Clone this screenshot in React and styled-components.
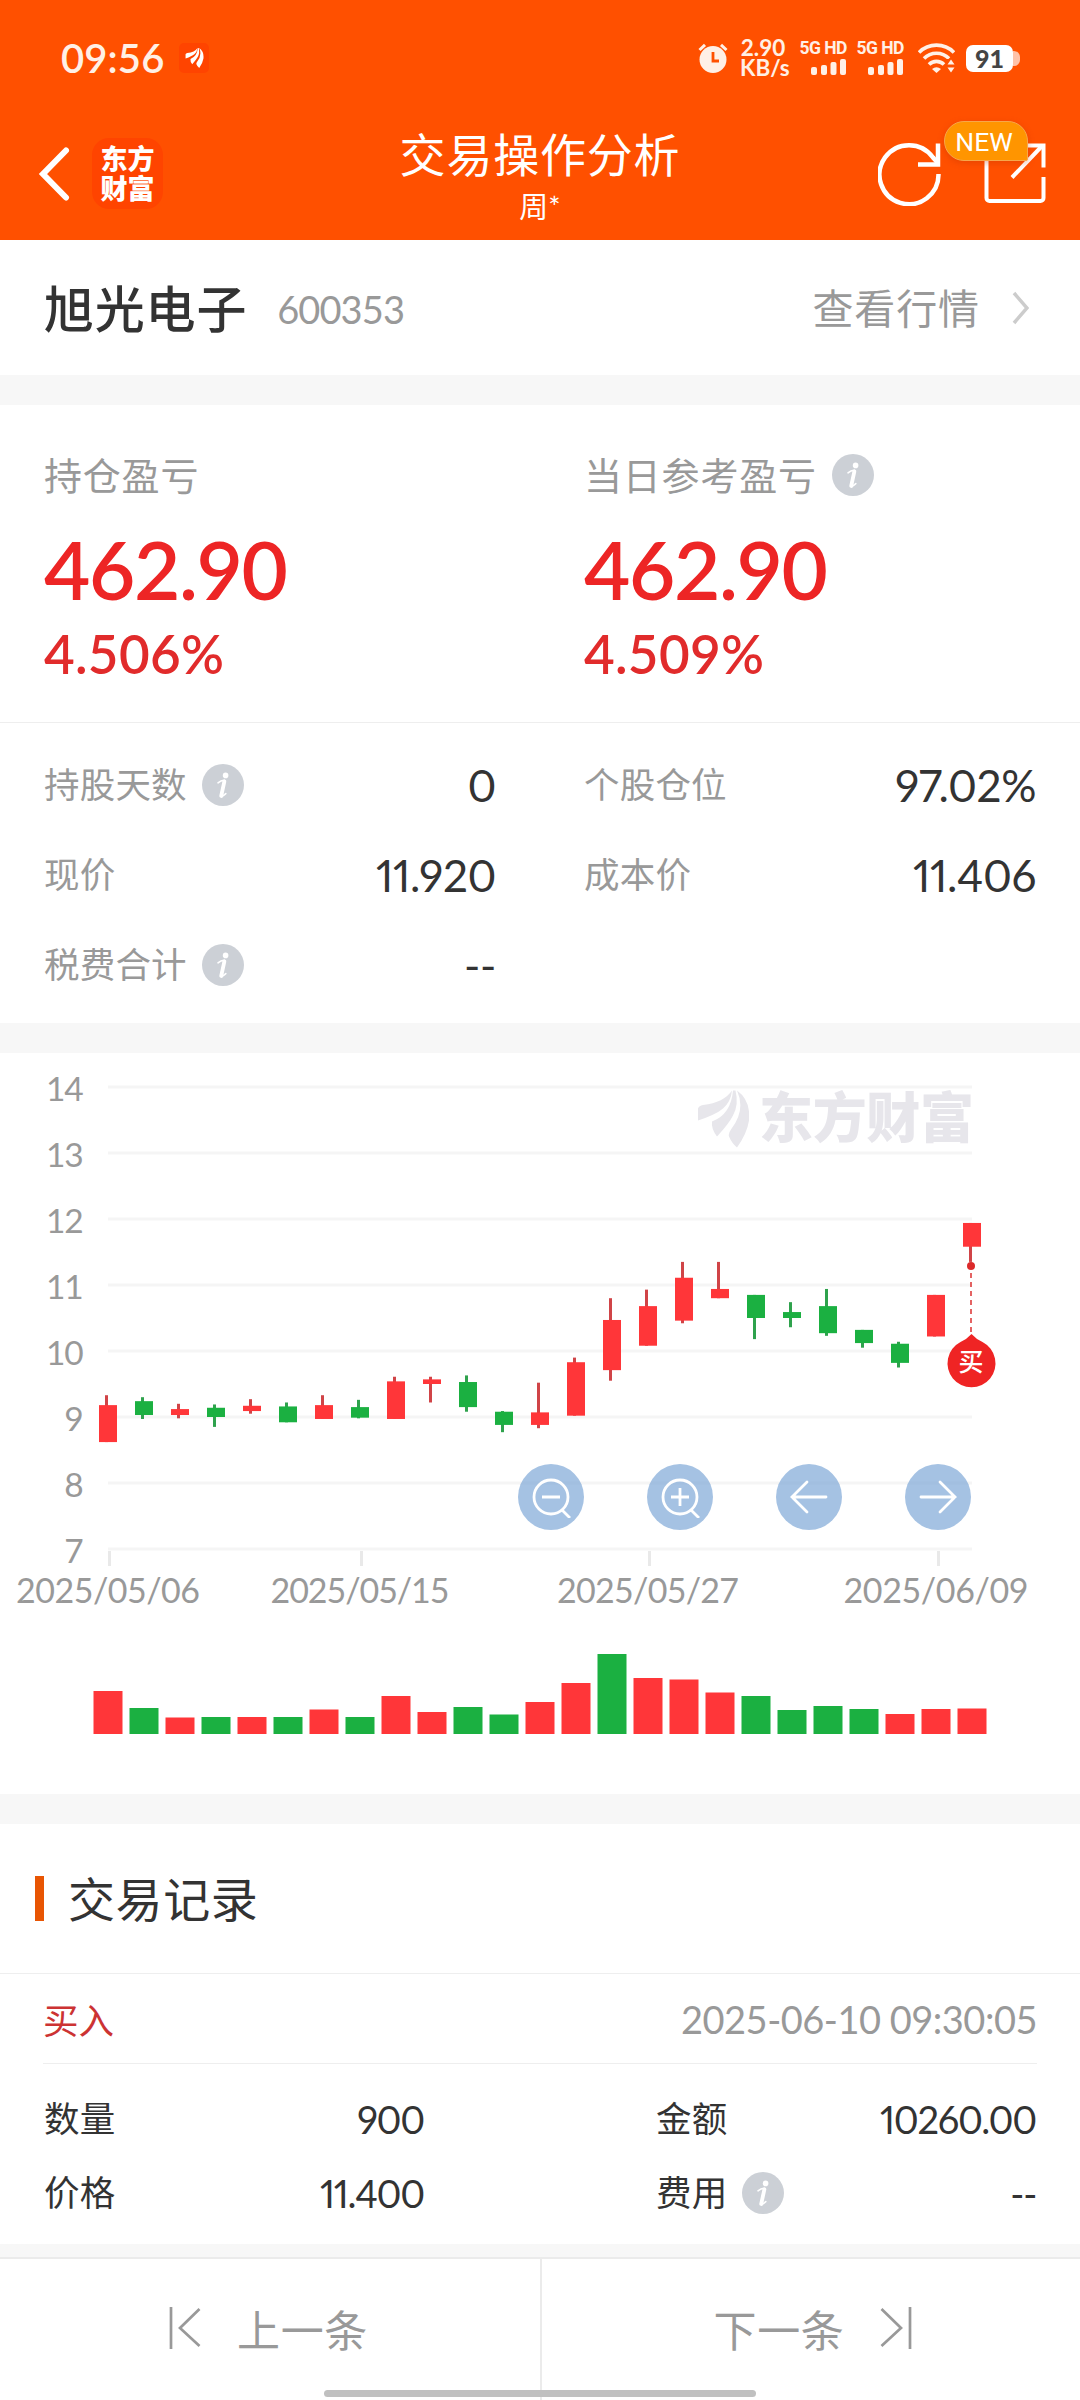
import styled, { createGlobalStyle } from 'styled-components';

const GlobalStyle = createGlobalStyle`
    * {
        box-sizing: border-box;
    }

    body {
        margin: 0;
        background-color: #ffffff;
        color: #333333;
        font-family: Lato, "Noto Sans CJK SC", sans-serif;
    }

    svg {
        display: block;
        flex-shrink: 0;
    }
`;

const Page = styled.div`
    width: 1080px;
    height: 2400px;
    display: flex;
    flex-direction: column;
    overflow: hidden;
`;

const Header = styled.header`
    height: 240px;
    background-color: #ff5000;
    color: #ffffff;
`;

const StatusBar = styled.div`
    height: 116px;
    padding: 0 60px 0 61px;
    display: flex;
    align-items: center;
    color: #fff0e6;
`;

const Clock = styled.span`
    width: 118px;
    font-size: 40px;
    font-weight: 600;
    line-height: 40px;
    letter-spacing: 0.1px;
`;

const StatusIcons = styled.div`
    margin-left: auto;
    display: flex;
    align-items: center;
`;

const NetSpeed = styled.div`
    width: 46px;
    margin-left: 12px;
    font-size: 22.5px;
    font-weight: 700;
    line-height: 20px;
    text-align: center;
    white-space: nowrap;
`;

const Signal = styled.div`
    width: 48px;
    margin-left: ${({ $gap }) => $gap}px;
    display: flex;
    flex-direction: column;
    align-items: flex-end;
    gap: 4px;
    font-family: Roboto, sans-serif;
    font-size: 17.5px;
    font-weight: 700;
    line-height: 14px;
    letter-spacing: -0.5px;
    white-space: nowrap;
`;

const WifiIcon = styled.svg`
    margin-left: 14px;
`;

const Battery = styled.div`
    width: 47px;
    height: 27px;
    margin-left: 11px;
    border-radius: 7px;
    background-color: #ffffff;
    color: #444444;
    font-size: 25px;
    font-weight: 900;
    line-height: 27px;
    text-align: center;
`;

const BatteryTip = styled.div`
    width: 7px;
    height: 15px;
    border-radius: 0 6px 6px 0;
    background-color: #ffc2a8;
`;

const NavBar = styled.div`
    height: 124px;
    padding: 0 34px 9px 38px;
    display: grid;
    grid-template-columns: 1fr 300px 1fr;
    align-items: center;
`;

const NavLeft = styled.div`
    display: flex;
    align-items: center;
    gap: 22px;
`;

const LogoBox = styled.div`
    width: 71px;
    height: 71px;
    padding-top: 6px;
    border-radius: 17px;
    background-color: #ff4400;
    font-size: 27px;
    font-weight: 900;
    line-height: 30px;
    text-align: center;
`;

const Title = styled.div`
    margin-left: -4px;
    padding-top: 10px;
    text-align: center;
    white-space: nowrap;

    h1 {
        margin: 0;
        font-size: 46px;
        font-weight: 400;
        line-height: 56px;
        letter-spacing: 0.8px;
    }

    p {
        margin: 0;
        font-size: 29px;
        line-height: 47px;
    }
`;

const NavRight = styled.div`
    display: flex;
    justify-content: flex-end;
    gap: 42px;
`;

const ShareButton = styled.div`
    position: relative;
`;

const NewBadge = styled.span`
    position: absolute;
    top: -21px;
    left: -40px;
    width: 84px;
    height: 40px;
    border: 1px solid #f7a64a;
    border-radius: 20px 20px 2px 20px;
    background-color: #ff9500;
    box-shadow: 0 2px 6px rgba(190, 50, 0, 0.35);
    font-family: Roboto, sans-serif;
    font-size: 26.5px;
    line-height: 39px;
    text-align: center;
    padding-right: 4px;
`;

const Divider = styled.div`
    height: ${({ $height }) => $height}px;
    flex-shrink: 0;
    background-color: #f7f7f7;
`;

const StockBar = styled.section`
    height: 135px;
    padding: 3px 51px 0 44px;
    display: flex;
    align-items: center;
`;

const StockName = styled.h2`
    margin: 0;
    font-size: 50px;
    font-weight: 500;
    line-height: 60px;
    letter-spacing: 0.8px;
`;

const StockCode = styled.span`
    margin-left: 30px;
    color: #999999;
    font-size: 38px;
    line-height: 40px;
    letter-spacing: -0.9px;
`;

const QuoteLink = styled.a`
    margin-left: auto;
    display: flex;
    align-items: center;
    gap: 32px;
    color: #999999;
    font-size: 41px;
    line-height: 44px;
    letter-spacing: 0.9px;

    svg {
        margin-top: -3px;
    }
`;

const Summary = styled.section`
    height: 318px;
    padding-top: 48px;
    display: grid;
    grid-template-columns: 1fr 1fr;
    border-bottom: 1px solid #eeeeee;
`;

const SummaryItem = styled.div`
    padding-left: 44px;
    color: #ed2525;
`;

const SummaryLabel = styled.div`
    height: 44px;
    display: flex;
    align-items: center;
    gap: 15px;
    color: #999999;
    font-size: 38px;
    line-height: 44px;
    letter-spacing: 0.8px;
`;

const Profit = styled.div`
    margin-top: 30px;
    font-size: 80px;
    font-weight: 600;
    line-height: 84px;
    letter-spacing: -1.4px;
`;

const ProfitRate = styled.div`
    margin-top: 11px;
    font-size: 53px;
    font-weight: 600;
    line-height: 64px;
    letter-spacing: 0.3px;
    color: #e12b2b;
`;

const Details = styled.section`
    height: 300px;
    padding: 17px 44px 0;
    display: grid;
    grid-template-columns: 452px 452px;
    grid-auto-rows: 90px;
    column-gap: 88px;
`;

const DetailRow = styled.div`
    display: flex;
    align-items: center;
    justify-content: space-between;
`;

const DetailLabel = styled.span`
    display: flex;
    align-items: center;
    gap: 15px;
    color: ${({ $dark }) => ($dark ? '#333333' : '#999999')};
    font-size: 35.5px;
    line-height: 42px;
    letter-spacing: 0.2px;
`;

const DetailValue = styled.span`
    font-size: 44px;
    line-height: 50px;
    letter-spacing: -0.4px;
    font-feature-settings: "pnum";
`;

const ChartPanel = styled.section`
    position: relative;
    height: 741px;
`;

const ChartTools = styled.div`
    position: absolute;
    top: 411px;
    left: 518px;
    display: flex;
    gap: 63px;
`;

const ToolButton = styled.button`
    width: 66px;
    height: 66px;
    padding: 0;
    border: 0;
    border-radius: 50%;
    background-color: rgba(119, 162, 212, 0.66);
    display: flex;
    align-items: center;
    justify-content: center;
`;

const RecordsTitle = styled.div`
    height: 150px;
    padding: 0 35px;
    display: flex;
    align-items: center;
    gap: 24px;
    border-bottom: 1px solid #eeeeee;

    &::before {
        content: "";
        width: 9px;
        height: 45px;
        background-color: #e85503;
    }

    h3 {
        margin: 0;
        font-size: 47px;
        font-weight: 400;
        line-height: 56px;
        letter-spacing: 0.6px;
    }
`;

const RecordHead = styled.div`
    height: 90px;
    margin: 0 43px;
    padding-top: 1px;
    display: flex;
    align-items: center;
    justify-content: space-between;
    border-bottom: 1px solid #eeeeee;
    color: #999999;
    font-size: 38px;
    letter-spacing: -0.5px;
`;

const Side = styled.span`
    margin-top: -2px;
    color: #cc3333;
    font-size: 35.5px;
    letter-spacing: 0;
`;

const RecordBody = styled.div`
    height: 180px;
    padding: 18px 44px 0;
    display: grid;
    grid-template-columns: 380px 380px;
    grid-auto-rows: 74px;
    justify-content: space-between;

    ${DetailValue} {
        font-size: 38px;
        letter-spacing: -1.3px;
    }
`;

const Footer = styled.nav`
    position: relative;
    height: 143px;
    display: grid;
    grid-template-columns: 1fr 1fr;
    border-top: 2px solid #ebebeb;
`;

const PagerButton = styled.div`
    padding: 0 3px 3px 0;
    display: flex;
    align-items: center;
    justify-content: center;
    gap: 36px;
    color: #999999;
    font-size: 43px;
    letter-spacing: 0.6px;

    & + & {
        border-left: 2px solid #ebebeb;
        padding: 0 0 3px 4px;
    }
`;

const HomeIndicator = styled.div`
    position: absolute;
    left: 324px;
    bottom: 3px;
    width: 432px;
    height: 7px;
    border-radius: 4px;
    background-color: #c0c0c0;
`;

const RED = '#ff3639';
const GREEN = '#1bb041';

// candle colour, body top, body bottom, high, low, volume colour, volume
const CANDLES = [
    [RED, 9.18, 8.62, 9.33, 8.62, RED, 43],
    [GREEN, 9.24, 9.03, 9.3, 8.97, GREEN, 26],
    [RED, 9.12, 9.03, 9.2, 8.98, RED, 16.5],
    [GREEN, 9.14, 9.0, 9.19, 8.85, GREEN, 17],
    [RED, 9.17, 9.09, 9.27, 9.05, RED, 17],
    [GREEN, 9.16, 8.92, 9.22, 8.92, GREEN, 17],
    [RED, 9.18, 8.97, 9.33, 8.97, RED, 24.5],
    [GREEN, 9.15, 8.99, 9.26, 8.98, GREEN, 17],
    [RED, 9.54, 8.97, 9.61, 8.97, RED, 38],
    [RED, 9.57, 9.5, 9.61, 9.22, RED, 22],
    [GREEN, 9.53, 9.15, 9.63, 9.08, GREEN, 27],
    [GREEN, 9.08, 8.88, 9.09, 8.77, GREEN, 19.5],
    [RED, 9.07, 8.88, 9.52, 8.83, RED, 32],
    [RED, 9.83, 9.02, 9.9, 9.02, RED, 51],
    [RED, 10.47, 9.71, 10.8, 9.55, GREEN, 80],
    [RED, 10.68, 10.08, 10.93, 10.08, RED, 56],
    [RED, 11.11, 10.46, 11.35, 10.42, RED, 54.5],
    [RED, 10.94, 10.8, 11.35, 10.8, RED, 41.5],
    [GREEN, 10.85, 10.5, 10.85, 10.18, GREEN, 38],
    [GREEN, 10.59, 10.5, 10.74, 10.36, GREEN, 24],
    [GREEN, 10.68, 10.27, 10.94, 10.23, GREEN, 28],
    [GREEN, 10.32, 10.12, 10.32, 10.05, GREEN, 25],
    [GREEN, 10.11, 9.82, 10.14, 9.75, RED, 20],
    [RED, 10.85, 10.22, 10.85, 10.22, RED, 25],
    [RED, 11.94, 11.58, 11.94, 11.35, RED, 25.5],
];

const PRICES = [14, 13, 12, 11, 10, 9, 8, 7];

const DATES = [
    { x: 109, label: '2025/05/06', textX: 108, width: 184 },
    { x: 361, label: '2025/05/15', textX: 360, width: 179 },
    { x: 649, label: '2025/05/27', textX: 648, width: 182 },
    { x: 938, label: '2025/06/09', textX: 936, width: 185 },
];

const priceY = (price) => 34 + (14 - price) * 66;

function InfoIcon() {
    return (
        <svg width="42" height="42" viewBox="0 0 42 42">
            <circle cx="21" cy="21" r="21" fill="#ccd0d6" />
            <circle cx="23.6" cy="11.4" r="2.8" fill="#ffffff" />
            <path
                d="M16 18.8c2-1.6 4-2.6 6.2-2.4-.8 4.6-2.6 9.6-3 14.6-.1 1.6.8 2 4.6-1.4"
                fill="none"
                stroke="#ffffff"
                strokeWidth="1.6"
                strokeLinecap="round"
            />
            <path d="M22.4 17.4 19.2 32" stroke="#ffffff" strokeWidth="3.8" strokeLinecap="round" />
        </svg>
    );
}

function BrandMark({ color, ...rest }) {
    return (
        <svg viewBox="0 0 51 57" fill={color} {...rest}>
            <path d="M0 30V18q1-3 5-3.500Q26 12 34 0 33 11 25 18 18 24 0 30Z" />
            <path d="M14 31Q33 24 35 0h2.500Q41 14 35 25 31 33 19 46 13 38 14 31Z" />
            <path d="M39 0Q53 10 51 30 49 43 39 57 34 53 31 46 30 43 33 39 48 20 39 0Z" />
        </svg>
    );
}

function SignalBars() {
    return (
        <svg width="36" height="16" viewBox="0 0 36 16" fill="currentColor">
            <rect x="0" y="8" width="6" height="8" rx="2" />
            <rect x="10" y="6" width="6" height="10" rx="2" />
            <rect x="19.5" y="3" width="6" height="13" rx="2" />
            <rect x="29" y="0" width="6" height="16" rx="2" />
        </svg>
    );
}

function Status() {
    return (
        <StatusBar>
            <Clock>09:56</Clock>
            <svg width="30" height="30" viewBox="0 0 30 30">
                <rect width="30" height="30" rx="5" fill="#ff4400" />
                <BrandMark color="#ffffff" x="6" y="5" width="19" height="20" />
            </svg>
            <StatusIcons>
                <svg width="30" height="30" viewBox="0 0 30 30">
                    <circle cx="15" cy="16.5" r="13.5" fill="#fff0e6" />
                    <path d="M1.5 7 7 1.8M28.5 7 23 1.8" stroke="#fff0e6" strokeWidth="3" />
                    <path d="M15 9v9h6" fill="none" stroke="#ff5000" strokeWidth="2.8" />
                </svg>
                <NetSpeed>
                    2.90
                    <br />
                    KB/s
                </NetSpeed>
                <Signal $gap={13}>
                    5G HD
                    <SignalBars />
                </Signal>
                <Signal $gap={9}>
                    5G HD
                    <SignalBars />
                </Signal>
                <WifiIcon width="37" height="30" viewBox="0 0 37 30">
                    <g fill="none" stroke="#fff0e6" strokeWidth="3.6">
                        <path d="M1 9.5a24.500 24.500 0 0 1 35 0" />
                        <path d="M6 15.500a17.500 17.500 0 0 1 25 0" />
                        <path d="M11 21.500a10.500 10.500 0 0 1 15 0" />
                    </g>
                    <path d="M14 26q4.500-3.500 9 0l-4.500 4Z" fill="#fff0e6" />
                    <path d="M28 16h9v14h-9Z" fill="#ff5000" />
                    <path d="m33 16.500 3.500 5h-7ZM33 29.500l3.500-5h-7Z" fill="#fff0e6" />
                </WifiIcon>
                <Battery>91</Battery>
                <BatteryTip />
            </StatusIcons>
        </StatusBar>
    );
}

function Nav() {
    return (
        <NavBar>
            <NavLeft>
                <svg width="32" height="54" viewBox="0 0 32 54">
                    <path
                        d="M28 3.5 5 27l23 23.5"
                        fill="none"
                        stroke="#ffffff"
                        strokeWidth="6"
                        strokeLinecap="round"
                    />
                </svg>
                <LogoBox>
                    东方
                    <br />
                    财富
                </LogoBox>
            </NavLeft>
            <Title>
                <h1>交易操作分析</h1>
                <p>周*</p>
            </Title>
            <NavRight>
                <svg width="64" height="64" viewBox="0 0 64 64" fill="none" stroke="#ffffff" strokeWidth="4.500">
                    <path d="M60.500 32A29.500 29.500 0 1 1 55 15.500L60 21" />
                    <path d="M60 1.500v21H40" />
                </svg>
                <ShareButton>
                    <svg width="62" height="62" viewBox="0 0 62 62" fill="none" stroke="#ffffff" strokeWidth="4">
                        <path d="M31 3.500h28.500v22M59.500 35v21a3 3 0 0 1-3 3h-51a3 3 0 0 1-3-3V4" />
                        <path d="M58 4 28 35.500" />
                    </svg>
                    <NewBadge>NEW</NewBadge>
                </ShareButton>
            </NavRight>
        </NavBar>
    );
}

function PriceChart() {
    return (
        <svg width="1080" height="741" viewBox="0 0 1080 741">
            <g stroke="#f5f5f5" strokeWidth="3">
                {PRICES.map((price) => (
                    <line key={price} x1="108" x2="972" y1={priceY(price)} y2={priceY(price)} />
                ))}
            </g>
            <g fill="#999999" fontSize="33.5" textAnchor="end" letterSpacing="-1.2">
                {PRICES.map((price) => (
                    <text key={price} x="82.5" y={priceY(price) + 13.5}>
                        {price}
                    </text>
                ))}
            </g>

            <BrandMark color="#e7e6eb" x="698" y="37" width="51" height="58" />
            <text x="759" y="85" fill="#e7e6eb" fontSize="54" fontWeight="900" textLength="215">
                东方财富
            </text>

            <g fill="#999999" fontSize="34" textAnchor="middle">
                {DATES.map(({ x, label, textX, width }) => (
                    <g key={label}>
                        <rect x={x - 1} y="498" width="3" height="15" fill="#e9e9e9" />
                        <text x={textX} y="550" textLength={width}>
                            {label}
                        </text>
                    </g>
                ))}
            </g>

            {CANDLES.map(([color, top, bottom, high, low, volumeColor, volume], i) => {
                const x = 108 + i * 36;
                return (
                    <g key={i} fill={color}>
                        <rect
                            x={x - 3}
                            y={priceY(high)}
                            width="3"
                            height={priceY(low) - priceY(high)}
                            fill={color === RED ? '#d04447' : '#2fa24d'}
                        />
                        <rect x={x - 9} y={priceY(top)} width="18" height={priceY(bottom) - priceY(top)} />
                        <rect x={x - 14.5} y={681 - volume} width="29" height={volume} fill={volumeColor} />
                    </g>
                );
            })}

            <line x1="971" x2="971" y1="220" y2="284" stroke="#dc3030" strokeWidth="1.5" strokeDasharray="5 4" />
            <circle cx="971" cy="213" r="4" fill="#dc2a2a" />
            <path d="M971.500 281q5 5.500 11 8a24 24 0 1 1-22 0q6-2.500 11-8Z" fill="#ef2424" />
            <text x="971" y="317.5" fill="#ffffff" fontSize="25" fontWeight="500" textAnchor="middle">
                买
            </text>
        </svg>
    );
}

function ZoomGlyph({ plus }) {
    return (
        <svg width="42" height="42" viewBox="0 0 42 42" fill="none" stroke="#ffffff" strokeWidth="2.8">
            <circle cx="21" cy="21" r="17" />
            <path d="M12 21h18M32 34l8 8" />
            {plus && <path d="M21 12v18" />}
        </svg>
    );
}

function ArrowGlyph({ right }) {
    return (
        <svg width="38" height="34" viewBox="0 0 38 34" fill="none" stroke="#ffffff" strokeWidth="2.8" strokeLinecap="round">
            {right ? <path d="M2 17h34M21 2l15 15-15 15" /> : <path d="M36 17H2M17 2 2 17l15 15" />}
        </svg>
    );
}

function PagerIcon({ next }) {
    return (
        <svg width="32" height="42" viewBox="0 0 32 42" fill="none" stroke="#999999" strokeWidth="2.7">
            {next ? <path d="M1.5 2 21 21 1.5 39M30 0v42" /> : <path d="M30.5 2 11 21l19.5 18M2 0v42" />}
        </svg>
    );
}

function Detail({ label, value, info, dark }) {
    return (
        <DetailRow>
            <DetailLabel $dark={dark}>
                {label}
                {info && <InfoIcon />}
            </DetailLabel>
            <DetailValue>{value}</DetailValue>
        </DetailRow>
    );
}

function App() {
    return (
        <Page>
            <GlobalStyle />
            <Header>
                <Status />
                <Nav />
            </Header>

            <StockBar>
                <StockName>旭光电子</StockName>
                <StockCode>600353</StockCode>
                <QuoteLink>
                    查看行情
                    <svg width="17" height="34" viewBox="0 0 17 34">
                        <path d="M2 2l13 15L2 32" fill="none" stroke="#cccccc" strokeWidth="3.5" />
                    </svg>
                </QuoteLink>
            </StockBar>
            <Divider $height={30} />

            <Summary>
                <SummaryItem>
                    <SummaryLabel>持仓盈亏</SummaryLabel>
                    <Profit>462.90</Profit>
                    <ProfitRate>4.506%</ProfitRate>
                </SummaryItem>
                <SummaryItem>
                    <SummaryLabel>
                        当日参考盈亏
                        <InfoIcon />
                    </SummaryLabel>
                    <Profit>462.90</Profit>
                    <ProfitRate>4.509%</ProfitRate>
                </SummaryItem>
            </Summary>
            <Details>
                <Detail label="持股天数" value="0" info />
                <Detail label="个股仓位" value="97.02%" />
                <Detail label="现价" value="11.920" />
                <Detail label="成本价" value="11.406" />
                <Detail label="税费合计" value="--" info />
            </Details>
            <Divider $height={30} />

            <ChartPanel>
                <PriceChart />
                <ChartTools>
                    <ToolButton><ZoomGlyph /></ToolButton>
                    <ToolButton><ZoomGlyph plus /></ToolButton>
                    <ToolButton><ArrowGlyph /></ToolButton>
                    <ToolButton><ArrowGlyph right /></ToolButton>
                </ChartTools>
            </ChartPanel>
            <Divider $height={30} />

            <RecordsTitle>
                <h3>交易记录</h3>
            </RecordsTitle>
            <RecordHead>
                <Side>买入</Side>
                2025-06-10 09:30:05
            </RecordHead>
            <RecordBody>
                <Detail label="数量" value="900" dark />
                <Detail label="金额" value="10260.00" dark />
                <Detail label="价格" value="11.400" dark />
                <Detail label="费用" value="--" info dark />
            </RecordBody>
            <Divider $height={13} />

            <Footer>
                <PagerButton>
                    <PagerIcon />
                    上一条
                </PagerButton>
                <PagerButton>
                    下一条
                    <PagerIcon next />
                </PagerButton>
                <HomeIndicator />
            </Footer>
        </Page>
    );
}

export default App;
